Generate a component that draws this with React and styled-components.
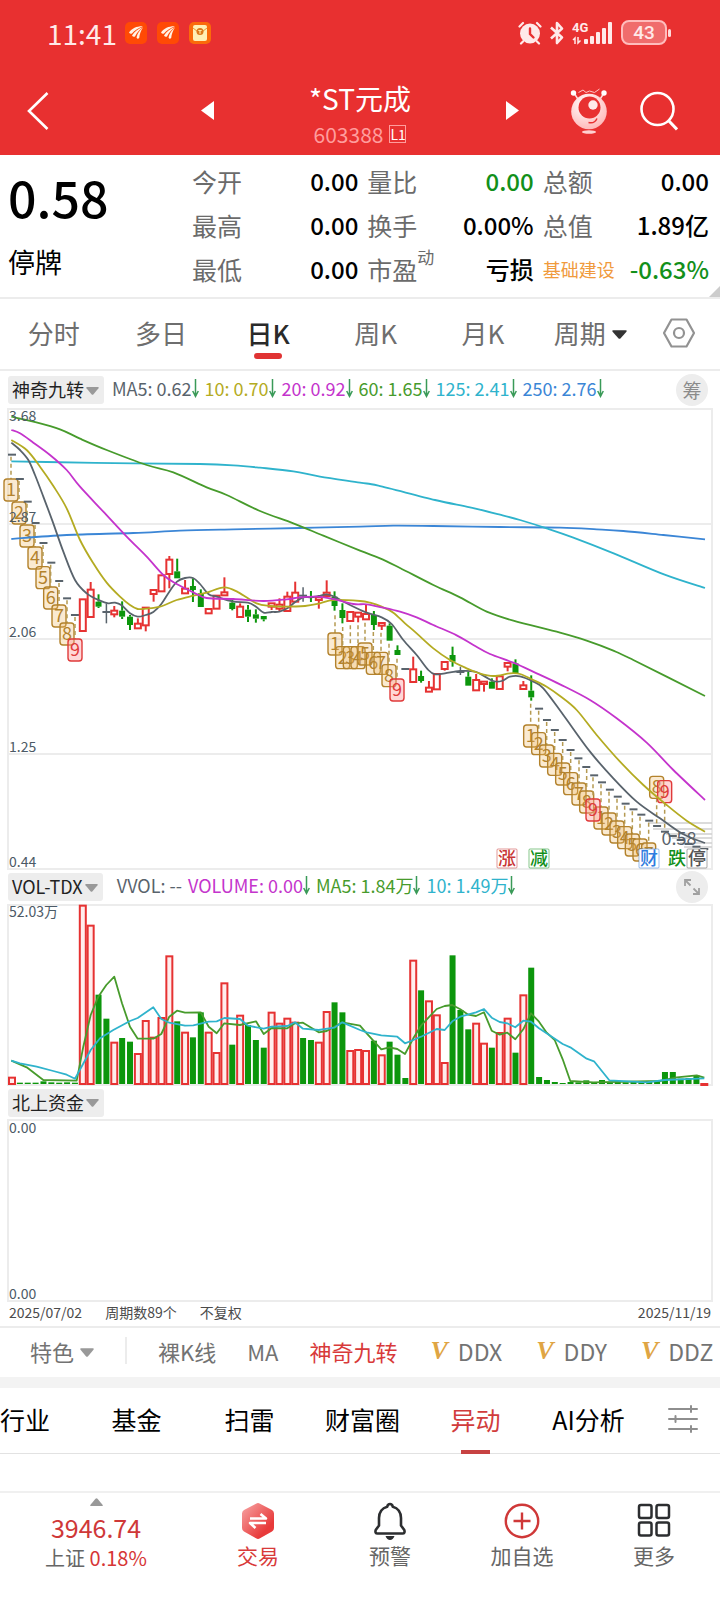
import React from "react";
import styled, { createGlobalStyle, css } from "styled-components";

const red = "#e83030";
const Global = createGlobalStyle`
  * { box-sizing: border-box; }
  body { margin: 0; background: #fff; font-family: "Noto Sans CJK SC", "Noto Sans", sans-serif; color: #000; }
  button { font: inherit; color: inherit; background: none; border: 0; padding: 0; margin: 0; cursor: pointer; }
  svg { display: block; flex: none; }
  h1, p, dl, dd, dt { margin: 0; font-weight: 400; }
`;

const Page = styled.div`
  min-height: 100vh;
  display: flex;
  flex-direction: column;
  overflow-x: hidden;
`;

/* ---------- header ---------- */
const Header = styled.header`
  background: ${red};
  color: #fff;
  height: 155px;
`;
const StatusBar = styled.div`
  height: 66px;
  padding: 0 48px 0 47px;
  display: flex;
  align-items: center;
  gap: 8px;
`;
const Clock = styled.span`
  font-size: 28px;
  line-height: 32px;
  color: #ffe9e9;
`;
const StatusApps = styled.div`
  display: flex;
  gap: 10px;
  flex: 1;
`;
const TitleBar = styled.div`
  height: 89px;
  padding: 0 42px;
  display: grid;
  grid-template-columns: 1fr 318px 1fr;
  align-items: center;
`;
const BackButton = styled.button`
  justify-self: start;
  && { margin-left: -16px; }
`;
const Switcher = styled.div`
  display: flex;
  align-items: center;
  justify-content: space-between;
`;
const TitleBlock = styled.div`
  text-align: center;
`;
const StockName = styled.h1`
  font-size: 28px;
  line-height: 40px;
  padding-top: 6px;
`;
const StockCode = styled.p`
  display: flex;
  align-items: center;
  justify-content: center;
  gap: 6px;
  font-size: 21px;
  line-height: 32px;
  color: #ff9d9d;
`;
const Level = styled.span`
  border: 1px solid #ff9d9d;
  color: #fff;
  font-size: 14px;
  line-height: 16px;
  height: 18px;
  width: 17px;
`;
const HeaderActions = styled.div`
  display: flex;
  justify-content: flex-end;
  align-items: center;
  gap: 32px;
`;

/* ---------- quote ---------- */
const Quote = styled.section`
  display: grid;
  grid-template-columns: 184px 1fr;
  padding: 4px 11px 5px 8px;
  height: 144px;
  border-bottom: 2px solid #ececec;
  position: relative;
`;
const Fold = styled.span`
  position: absolute;
  right: 0;
  bottom: 0;
  border-left: 11px solid transparent;
  border-bottom: 11px solid #ccc;
`;
const Price = styled.p`
  font-size: 50px;
  line-height: 74px;
  font-weight: 500;
`;
const State = styled.p`
  font-size: 27px;
  line-height: 58px;
`;
const Stats = styled.dl`
  display: grid;
  grid-template-columns: repeat(3, 1fr);
  grid-auto-rows: 44px;
  column-gap: 9px;
`;
const Stat = styled.div`
  display: flex;
  justify-content: space-between;
  align-items: center;
  white-space: nowrap;
  line-height: 44px;
`;
const StatLabel = styled.dt`
  font-size: ${(p) => (p.$sector ? 18 : 25)}px;
  color: ${(p) => (p.$sector ? "#f09a3c" : "#6b6b6b")};
  position: relative;
`;
const Sup = styled.sup`
  position: absolute;
  left: 100%;
  top: -12px;
  font-size: 17px;
`;
const StatValue = styled.dd`
  font-size: 24px;
  font-weight: 500;
  color: ${(p) => (p.$down ? "#12901a" : "#000")};
`;

/* ---------- period tabs ---------- */
const Periods = styled.nav`
  display: flex;
  align-items: center;
  height: 72px;
  padding-right: 6px;
  border-bottom: 2px solid #ececec;
`;
const Period = styled.button`
  flex: 107 1 0;
  height: 70px;
  display: flex;
  align-items: center;
  justify-content: center;
  gap: 6px;
  font-size: 26px;
  line-height: 40px;
  && { padding-bottom: 2px; }
  position: relative;
  white-space: nowrap;
  color: #6e6e6e;
  ${(p) => p.$active && css`
    color: #2a2a2a;
    font-weight: 500;
    &::after {
      content: "";
      position: absolute;
      bottom: 10px;
      width: 28px;
      height: 6px;
      border-radius: 3px;
      background: #e03333;
    }
  `}
`;
const SettingsButton = styled(Period)`
  flex: 70 1 0;
`;

/* ---------- charts ---------- */
const ChartArea = styled.section`
  padding: 0 8px;
`;
const Legend = styled.div`
  display: flex;
  align-items: center;
  height: ${(p) => p.$height}px;
  gap: 6px;
`;
const IndicatorButton = styled.button`
  display: flex;
  align-items: center;
  gap: 2px;
  height: 28px;
  && {
    padding: 0 5px 2px 4px;
    margin-right: ${(p) => (p.$wide ? 8 : 2)}px;
  }
  border-radius: 3px;
  background: #ededed;
  color: #222;
  font-size: 18px;
  line-height: 26px;
  white-space: nowrap;
`;
const Reading = styled.span`
  display: flex;
  align-items: center;
  padding-bottom: 4px;
  font-size: 18px;
  line-height: 26px;
  white-space: nowrap;
  color: ${(p) => p.$color};
`;
const Round = styled.button`
  width: 32px;
  height: 32px;
  && { margin: 0 4px 0 auto; }
  border-radius: 50%;
  background: #ededed;
  color: #8b8b8b;
  font-size: 19px;
  line-height: 32px;
  display: flex;
  align-items: center;
  justify-content: center;
`;
const Plot = styled.svg`
  width: 100%;
  height: auto;
  overflow: visible;
  font-family: "Noto Sans CJK SC", sans-serif;
`;
const DateRow = styled.div`
  display: flex;
  gap: 23px;
  font-size: 14px;
  line-height: 23px;
  padding: 0 1px 2px;
  color: #4b4b4b;
  & > :last-child { margin-left: auto; }
`;

/* ---------- feature strip ---------- */
const Features = styled.nav`
  display: flex;
  align-items: center;
  gap: 31px;
  height: 51px;
  padding: 0 0 4px 30px;
  border-top: 2px solid #ececec;
  overflow: hidden;
`;
const Feature = styled.button`
  flex: none;
  display: flex;
  align-items: center;
  gap: ${(p) => (p.$vip ? 10 : 6)}px;
  && { padding: ${(p) => (p.$vip ? "0 1px 0 2px" : "0")}; }
  font-size: ${(p) => (p.$vip ? 23 : 22)}px;
  line-height: 32px;
  white-space: nowrap;
  color: ${(p) => (p.$active ? "#d83a3a" : "#737373")};
`;
const Divider = styled.span`
  flex: none;
  width: 2px;
  height: 27px;
  background: #ececec;
`;
const Vip = styled.span`
  font-family: "Liberation Serif", serif;
  font-style: italic;
  font-weight: 700;
  font-size: 26px;
  color: #dfa544;
`;

/* ---------- section tabs ---------- */
const Sections = styled.nav`
  display: flex;
  align-items: stretch;
  height: 77px;
  border-top: 11px solid #f3f3f3;
  border-bottom: 1px solid #e2e2e2;
`;
const SectionTab = styled.button`
  flex: ${(p) => p.$grow || 113} 1 0;
  display: flex;
  align-items: center;
  justify-content: ${(p) => (p.$cut ? "flex-start" : "center")};
  font-size: 25px;
  && { padding-bottom: 3px; }
  position: relative;
  white-space: nowrap;
  color: ${(p) => (p.$active ? "#d13c3c" : "#000")};
  ${(p) => p.$active && css`
    &::after {
      content: "";
      position: absolute;
      bottom: -1px;
      width: 29px;
      height: 4px;
      background: #c74242;
    }
  `}
`;

/* ---------- bottom bar ---------- */
const BottomBar = styled.nav`
  margin-top: auto;
  display: grid;
  grid-template-columns: 192fr 132fr 132fr 132fr 132fr;
  height: 113px;
  border-top: 2px solid #f0f0f0;
`;
const NavItem = styled.button`
  display: flex;
  flex-direction: column;
  align-items: center;
  && { padding-top: 9px; }
  font-size: 21px;
  line-height: 30px;
  color: ${(p) => (p.$active ? "#d83a3a" : "#666")};
`;
const IndexItem = styled.button`
  display: flex;
  flex-direction: column;
  align-items: center;
  && { padding-top: 5px; }
  font-size: 20px;
  line-height: 30px;
  color: #666;
`;
const IndexValue = styled.span`
  font-size: 25px;
  line-height: 32px;
  padding-top: 5px;
  color: #cf3838;
`;
const Up = styled.span`
  color: #d63636;
`;

/* ---------- icons ---------- */
const Caret = ({ w = 13, h = 8, color = "#999" }) => (
  <svg width={w} height={h + 3} viewBox="0 -3 13 11" preserveAspectRatio="none">
    <path d="M1.2 0h10.6q1.6 0 .7 1.3L7.5 7.3q-1 1.1-2 0L.5 1.3Q-.4 0 1.2 0z" fill={color} />
  </svg>
);
const DownArrow = () => (
  <svg width="7" height="20" viewBox="0 0 7 20" fill="none" stroke="#3a9a58" strokeWidth="1.5">
    <path d="M3.5 1v17M.7 13l2.8 5.4L6.3 13" />
  </svg>
);
const MailApp = () => (
  <svg width="22" height="22" viewBox="0 0 22 22">
    <rect width="22" height="22" rx="5" fill="#ff4a05" />
    <path d="M18 4.200C12 4 7 6 4 10.500q1.500 2 3.200.7C9.500 8.500 13 6 18 4.200zM18 5C13 7 9.500 9.500 7 13.500q1.200 2 3 1C12 10.500 14 8 18 5zM18 5.500c-3.500 3-5.500 5.500-6.500 10q1 2.300 2.700.6C14.500 12 16 8.500 18 5.500z" fill="#fff3e6" />
  </svg>
);
const PacketApp = () => (
  <svg width="22" height="22" viewBox="0 0 22 22">
    <rect width="22" height="22" rx="5" fill="#fb6a0a" />
    <rect x="4" y="3" width="14" height="16" rx="2" fill="#fff0b5" />
    <path d="M4 6l4.500 3.500M18 6l-4.500 3.500" stroke="#e39b3c" fill="none" />
    <circle cx="11" cy="9.500" r="3.500" fill="#dd7a1a" />
    <path d="M9.300 8.500h3.400M11 8.500v3.200" stroke="#ffe9a0" strokeWidth="1.200" />
  </svg>
);
const Alarm = () => (
  <svg width="24" height="24" viewBox="0 0 24 24" fill="none" stroke="#ffe9e9" strokeWidth="2.2" strokeLinecap="round">
    <circle cx="12" cy="12.500" r="10" fill="#ffe9e9" stroke="none" />
    <path d="M1.500 5.500L5 2M22.500 5.500L19 2M5 20.500l-2 2M19 20.500l2 2" />
    <path d="M12 7.500v5.500l3.500 3.500" stroke={red} strokeWidth="2.400" />
  </svg>
);
const Bluetooth = () => (
  <svg width="14" height="24" viewBox="0 0 14 24" fill="none" stroke="#ffe9e9" strokeWidth="2.600" strokeLinejoin="round">
    <path d="M1 6.500l11 10L7 22V2l5 5.500L1 17.500" />
  </svg>
);
const Signal = () => (
  <svg width="41" height="24" viewBox="0 0 41 24" fill="#ffe9e9">
    <text x="0" y="11" fontSize="13" fontWeight="700" fontFamily="Roboto, sans-serif">4G</text>
    <path d="M3 23v-6l-2 2M6 16v6l2.500-2.500" stroke="#ffe9e9" strokeWidth="1.500" fill="none" />
    <rect x="12" y="18" width="4" height="5" rx="1" />
    <rect x="18" y="15" width="4" height="8" rx="1" />
    <rect x="24" y="11" width="4" height="12" rx="1" />
    <rect x="30" y="7" width="4" height="16" rx="1" />
    <rect x="36" y="1" width="4" height="22" rx="1" />
  </svg>
);
const Battery = () => (
  <svg width="51" height="26" viewBox="0 0 51 26">
    <rect x="1" y="1" width="44" height="23" rx="7" fill="#f06c6c" stroke="#ffbcbc" strokeWidth="2" />
    <rect x="47" y="9" width="3" height="8" rx="1.500" fill="#ffdada" />
    <text x="23" y="19" textAnchor="middle" fontSize="19" fontWeight="500" fill="#ffe9e9" fontFamily="Roboto, sans-serif">43</text>
  </svg>
);
const Mascot = () => (
  <svg width="38" height="46" viewBox="0 0 38 46">
    <defs>
      <radialGradient id="ball" cx=".4" cy=".3" r=".8">
        <stop offset="0" stopColor="#fff" />
        <stop offset="1" stopColor="#ffb0b0" />
      </radialGradient>
    </defs>
    <path d="M4 5l4.500 7M34 5l-4.500 7" stroke="#ffdcdc" strokeWidth="1.500" />
    <circle cx="3.500" cy="5" r="2.700" fill="#fff" />
    <circle cx="34" cy="5" r="2.700" fill="#fff" />
    <path d="M8.500 4.500L13 2l3 2.500 3.500-1.500 5 1.500L29.500 1" stroke="#ffc4c4" fill="none" />
    <circle cx="19" cy="23.500" r="17.800" fill="url(#ball)" />
    <circle cx="19.500" cy="19.500" r="11" fill={red} />
    <circle cx="23" cy="17" r="4.700" fill="#ffe9e9" />
    <path d="M18.500 34.500q6 1.500 8.500-4" stroke={red} strokeWidth="1.500" fill="none" />
    <ellipse cx="19" cy="44" rx="7" ry="1.700" fill="#ffd0d0" />
  </svg>
);
const Search = () => (
  <svg width="38" height="40" viewBox="0 0 38 40" fill="none" stroke="#fff" strokeWidth="2.600">
    <circle cx="17.500" cy="18" r="16" />
    <path d="M28.500 29.500l8.500 9" strokeWidth="3" />
  </svg>
);
const Hexagon = () => (
  <svg width="32" height="30" viewBox="0 0 32 30" fill="none" stroke="#929292" strokeWidth="2.200">
    <path d="M8.500 1.500h15L31 15l-7.500 13.500h-15L1 15z" strokeLinejoin="round" />
    <circle cx="16" cy="15" r="5" />
  </svg>
);
const Expand = () => (
  <svg width="18" height="18" viewBox="0 0 18 18" fill="none" stroke="#a0a0a0" strokeWidth="1.800">
    <path d="M2 8V2h6M2 2l5.500 5.500M16 10v6h-6M16 16l-5.500-5.500" />
  </svg>
);
const Sliders = () => (
  <svg width="30" height="28" viewBox="0 0 30 28" fill="none" stroke="#8e8e8e" strokeWidth="2" strokeLinecap="round">
    <path d="M1 4h28M1 14h28M1 24h28M23 1v6M7.500 11v6M23 21v6" />
  </svg>
);
const Trade = () => (
  <svg width="34" height="38" viewBox="0 0 34 38">
    <defs>
      <linearGradient id="trade" x1="0" y1="0" x2="1" y2="1">
        <stop offset="0" stopColor="#f7a6a6" />
        <stop offset=".75" stopColor="#e83a3a" />
      </linearGradient>
    </defs>
    <path d="M15 1.700q2-1.200 4 0l12 6.300q2 1 2 3.500v14.500q0 2.500-2 3.500l-12 6.800q-2 1.200-4 0L3 29.500q-2-1-2-3.500V11.500Q1 9 3 8z" fill="url(#trade)" />
    <path d="M9 16.500h16L19.500 12M25 21H9l5.500 5" fill="none" stroke="#fff" strokeWidth="2.600" strokeLinejoin="round" />
  </svg>
);
const Bell = () => (
  <svg width="34" height="38" viewBox="0 0 34 38" fill="none" stroke="#2c2e30" strokeWidth="2.600" strokeLinejoin="round">
    <path d="M17 2c-1.500 0-2.500 1.200-2.800 2.700C9 6 6 10.500 6 16v7.500L2.700 28q-1 3.500 1.800 3.500h25q2.800 0 1.800-3.500L28 23.500V16c0-5.500-3-10-8.200-11.300C19.500 3.200 18.500 2 17 2z" />
    <path d="M12.500 34h9c-1 2.500-2.500 4-4.500 4s-3.500-1.500-4.500-4z" fill="#2c2e30" stroke="none" />
  </svg>
);
const Plus = () => (
  <svg width="36" height="38" viewBox="0 0 36 38" fill="none" stroke="#cf3838" strokeWidth="2.400">
    <circle cx="18" cy="19" r="16.200" />
    <path d="M9.500 19h17M18 10.500v17" />
  </svg>
);
const Grid = () => (
  <svg width="34" height="38" viewBox="0 0 34 38" fill="none" stroke="#2c2e30" strokeWidth="2.500">
    <rect x="2" y="3" width="12.500" height="13" rx="2" />
    <rect x="19.500" y="3" width="12.500" height="13" rx="2" />
    <rect x="2" y="20.500" width="12.500" height="13" rx="2" />
    <rect x="19.500" y="20.500" width="12.500" height="13" rx="2" />
  </svg>
);

/* ---------- chart data ---------- */
/* Each plot is 704 units wide; the series are stored at three times that resolution. */
const S = 3;
const barX = (i) => 4 + i * 7.867;
const line = (pts, ox, oy) =>
  pts.map(([x, y], i) => `${i ? "L" : "M"}${((x - ox) / S).toFixed(1)} ${((y - oy) / S).toFixed(1)}`).join("");
const smooth = (pts, ox, oy) => {
  const p = pts.map(([x, y]) => [(x - ox) / S, (y - oy) / S]);
  let d = `M${p[0]}`;
  for (let i = 0; i < p.length - 1; i++) {
    const a = p[i - 1] || p[i], b = p[i], c = p[i + 1], e = p[i + 2] || c;
    d += `C${b[0] + (c[0] - a[0]) / 6} ${b[1] + (c[1] - a[1]) / 6} ${c[0] - (e[0] - b[0]) / 6} ${c[1] - (e[1] - b[1]) / 6} ${c[0]} ${c[1]}`;
  }
  return d;
};

/* kind, body top, body bottom, high, low */
const candles = [
  ["-", 164], ["-", 237], ["-", 305], ["-", 369], ["-", 429], ["-", 488], ["-", 543], ["-", 595], ["-", 645],
  ["r", 598, 693], ["r", 569, 651, 546], ["g", 605, 620, 583, 624], ["+", 636, 636, 610, 670], ["r", 632, 643, 618, 652],
  ["g", 632, 650, 604, 657], ["g", 650, 675, 645, 690], ["r", 671, 685, 655], ["r", 623, 676, 623, 694], ["r", 570, 582, 570, 605],
  ["r", 526, 574], ["r", 479, 522, 468, 565], ["g", 514, 535, 476], ["r", 566, 580, 540], ["g", 558, 570, 535, 606],
  ["g", 580, 621, 568], ["r", 627, 640], ["r", 587, 626], ["r", 577, 586, 532], ["g", 608, 627, 596, 631],
  ["r", 620, 651, 610], ["g", 629, 650, 615, 666], ["g", 643, 656, 628, 668], ["g", 648, 658, 648, 664], ["r", 610, 620, 610, 630],
  ["r", 614, 626, 595, 635], ["r", 590, 633, 575], ["r", 578, 605, 545], ["+", 587, 587, 562, 605], ["g", 588, 594, 573, 606],
  ["r", 592, 600, 592, 626], ["r", 578, 588, 541], ["g", 590, 618, 574, 632], ["g", 630, 654, 610, 670], ["r", 636, 663],
  ["r", 638, 650, 638, 667], ["r", 642, 658, 612], ["g", 645, 675, 633, 690], ["r", 669, 677, 669, 690], ["g", 677, 722, 670],
  ["g", 750, 765, 736], ["-", 807], ["r", 808, 846, 770], ["g", 828, 843, 812, 848], ["r", 863, 875, 843], ["r", 822, 868],
  ["r", 786, 807, 786, 812], ["g", 765, 785, 740, 800], ["+", 816, 818, 800, 825], ["g", 830, 857, 815], ["r", 840, 871, 822],
  ["r", 845, 852, 845, 875], ["g", 845, 866, 835], ["r", 829, 867], ["r", 789, 800, 789, 814], ["g", 790, 820, 778],
  ["r", 856, 867, 843], ["g", 872, 892, 826, 902],
  ...[146, 180, 210, 240, 270, 295, 321, 346, 367, 389, 410, 431, 448, 464, 482, 498, 515, 528, 540, 552, 560, 567].map((y) => ["-", y + 780]),
];

/* number, centre x, centre y, y of the bar the dashed stem points at */
const counts = [
  [1, 33, 270, 164], [2, 57, 339, 237], [3, 81, 408, 305], [4, 105, 474, 369], [5, 129, 533, 429], [6, 152, 594, 488],
  [7, 177, 648, 543], [8, 201, 702, 595], [9, 225, 750, 645],
  [1, 1005, 732, 640], [2, 1028, 773, 675], [3, 1051, 773, 670], [4, 1074, 773, 670], [5, 1095, 762, 662], [6, 1120, 790, 690],
  [7, 1143, 790, 692], [8, 1167, 827, 725], [9, 1191, 870, 770],
  [1, 1592, 1008, 905], [2, 1616, 1031, 926], [3, 1640, 1068, 960], [4, 1664, 1093, 990], [5, 1688, 1122, 1020],
  [6, 1712, 1151, 1050], [7, 1737, 1182, 1075], [8, 1760, 1206, 1101],
  [1, 1803, 1254, 1147], [2, 1827, 1272, 1169], [3, 1851, 1296, 1190], [4, 1874, 1313, 1211], [5, 1897, 1335, 1228],
  [6, 1920, 1350, 1244], [7, 1946, 1362, 1262], [9, 1779, 1230, 1126],
  [8, 1970, 1162, 1275], [9, 1994, 1175, 1290],
];

const averages = [
  ["#3b86d6", [[34,417],[200,405],[400,399],[540,392],[700,388],[900,384],[1080,380],[1180,377],[1300,378],[1500,381],[1680,383],[1790,388],[1870,393],[1990,405],[2115,418]]],
  ["#2fb3cc", [[34,184],[140,186],[400,190],[600,192],[700,196],[780,203],[880,214],[960,230],[1080,248],[1135,257],[1305,300],[1410,322],[1500,344],[1560,360],[1640,385],[1718,412],[1841,460],[1994,524],[2115,564]]],
  ["#479b2c", [[34,50],[100,65],[180,88],[240,116],[320,150],[440,195],[520,217],[620,262],[680,285],[780,333],[880,370],[970,407],[1080,452],[1140,475],[1200,504],[1300,555],[1380,592],[1460,635],[1540,662],[1680,698],[1760,722],[1840,752],[1900,780],[2115,888]]],
  ["#59636c", [[34,128],[60,150],[85,180],[105,225],[130,290],[158,365],[190,455],[225,540],[260,580],[300,602],[325,610],[345,608],[365,616],[390,640],[413,650],[437,645],[460,636],[484,612],[508,575],[531,545],[555,534],[579,534],[600,552],[626,583],[650,590],[697,604],[744,608],[768,620],[791,638],[815,636],[838,635],[862,625],[885,607],[909,592],[933,592],[956,588],[980,583],[1003,590],[1050,615],[1100,638],[1145,652],[1175,672],[1210,720],[1250,765],[1285,810],[1305,823],[1335,820],[1380,813],[1425,815],[1455,830],[1480,843],[1505,843],[1530,830],[1560,829],[1600,845],[1630,865],[1690,945],[1770,1055],[1840,1135],[1910,1205],[1980,1255],[2050,1303],[2115,1329]]],
  ["#b4ab22", [[34,120],[80,150],[120,200],[160,258],[200,325],[240,420],[280,490],[320,548],[360,590],[390,615],[413,627],[437,626],[480,620],[530,600],[580,587],[620,578],[673,562],[715,577],[770,610],[810,618],[850,620],[915,618],[960,610],[1000,600],[1080,603],[1110,608],[1145,620],[1180,638],[1215,670],[1250,700],[1300,745],[1350,780],[1400,805],[1435,819],[1480,828],[1530,820],[1560,822],[1600,840],[1640,860],[1680,888],[1730,930],[1790,1005],[1860,1085],[1930,1155],[2000,1215],[2060,1262],[2115,1295]]],
  ["#c434cc", [[34,90],[60,100],[100,128],[150,165],[200,210],[240,260],[310,335],[380,410],[440,470],[490,525],[530,552],[580,577],[620,594],[700,597],[790,603],[860,598],[900,592],[950,590],[1000,597],[1060,612],[1100,613],[1145,622],[1200,635],[1250,652],[1300,675],[1370,706],[1420,735],[1470,762],[1540,788],[1610,820],[1680,853],[1770,900],[1850,955],[1940,1028],[2020,1110],[2115,1200]]],
];

const volumes = ("r620 g638 g638 g638 g634 g637 g638 g637 g638 r104 r164 g374 g446 r515 g504 g515 r549 r450 r500 r441 r256 g454 r485 g502 g427 r485 r546 r337 g524 r434 g465 g510 g533 r425 r458 r443 r455 g504 g510 r515 r423 g397 g427 r540 r537 r540 g512 r553 g515 g554 g624 r269 g361 r391 r433 r576 g256 g420 g478 r458 r518 g533 r486 r443 g548 r373 g293 g621 g630 g636 g639 g636 g637 g631 g637 g630 g637 g633 g637 g634 g637 g635 g634 g606 g606 g626 g624 g616 r639")
  .split(" ").map((s) => [s[0], Number(s.slice(1))]);

const volumeLines = [
  ["#479b2c", [[34,572],[80,592],[130,630],[230,632],[250,530],[272,435],[295,380],[319,345],[343,320],[366,400],[390,470],[413,506],[460,506],[484,492],[508,440],[531,422],[555,428],[602,427],[626,470],[650,490],[673,460],[720,465],[768,454],[791,492],[815,474],[862,475],[885,460],[909,458],[956,487],[980,483],[1027,457],[1080,467],[1100,490],[1144,538],[1168,532],[1192,537],[1215,552],[1240,505],[1263,467],[1286,442],[1310,417],[1334,408],[1357,405],[1381,418],[1405,434],[1428,438],[1452,427],[1475,482],[1499,494],[1522,488],[1546,508],[1570,478],[1593,430],[1617,455],[1640,488],[1664,510],[1688,568],[1711,633],[1780,637],[1980,633],[2030,622],[2090,616],[2113,623]]],
  ["#2fb3cc", [[34,572],[60,580],[110,590],[160,603],[200,614],[225,626],[272,540],[300,505],[340,480],[390,453],[413,444],[460,412],[484,447],[508,458],[555,467],[580,466],[626,455],[650,454],[673,444],[720,447],[744,467],[791,476],[815,470],[862,468],[885,457],[909,476],[956,480],[1003,473],[1027,457],[1080,480],[1100,487],[1144,496],[1192,500],[1215,520],[1240,510],[1263,500],[1310,477],[1334,480],[1357,454],[1381,440],[1428,427],[1452,417],[1475,443],[1499,456],[1522,460],[1546,472],[1570,452],[1593,455],[1617,475],[1688,522],[1711,532],[1760,566],[1782,574],[1828,631],[1940,637],[1994,630],[2113,625]]],
];

const UP = "#e63232", DOWN = "#0c960c", FLAT = "#59636c";

const Candle = ({ data, i }) => {
  const [kind, top, bottom = top, high = top, low = bottom] = data;
  const y = (v) => (v - 27) / S;
  const x = barX(i);
  if (kind === "-" || kind === "+")
    return (
      <g stroke={FLAT} strokeWidth="2">
        <path d={`M${x - 4} ${y(top)}h8`} />
        {kind === "+" && <path d={`M${x} ${y(high)}V${y(Math.max(low, bottom))}`} strokeWidth="1.5" />}
      </g>
    );
  const color = kind === "r" ? UP : DOWN;
  const end = Math.max(low, bottom);
  return (
    <g stroke={color} strokeWidth="2">
      {high < top && <path d={`M${x} ${y(high)}V${y(top)}`} />}
      {end > bottom && <path d={`M${x} ${y(bottom)}V${y(end)}`} />}
      <rect x={x - 3} y={y(top)} width="6" height={(bottom - top) / S} fill={kind === "r" ? "#fff" : color} strokeWidth={kind === "r" ? 2 : 0} />
    </g>
  );
};

const Count = ({ data: [n, cx, cy, stem] }) => {
  const x = (cx - 24) / S, y = (cy - 27) / S, t = (stem - 27) / S;
  const hot = n === 9;
  const color = hot ? "#e03a3a" : "#b3822c";
  return (
    <g>
      <path d={t < y ? `M${x} ${t + 2}V${y - 11}` : `M${x} ${y + 11}V${t}`} stroke="#b59a52" strokeWidth="1.500" strokeDasharray="4 3" />
      <rect x={x - 7} y={y - 11} width="14" height="22" rx="3" fill={hot ? "#ff9a9a" : "#f0b868"} fillOpacity={hot ? 0.4 : 0.3} stroke={color} strokeWidth="1.400" />
      <text x={x} y={y + 6} textAnchor="middle" fontSize="18" fill={color}>{n}</text>
    </g>
  );
};

const tags = [["涨", 489, "#c93636", "#c93636"], ["减", 521, "#12901a", "#12901a"], ["财", 631, "#2f7de0", "#2f7de0"], ["跌", 659, "#12901a", "#fff"], ["停", 679, "#555", "#555"]];

const Frame = ({ h }) => <rect x="0" y="0" width="704" height={h} fill="none" stroke="#ececec" strokeWidth="2" />;
const Scale = ({ y, children }) => <text x="1" y={y} fontSize="14" fill="#4c5a66">{children}</text>;

const PriceChart = () => (
  <Plot viewBox="0 0 704 460" role="img" aria-label="日K">
    <Frame h={460} />
    <path d="M0 115H704M0 230H704M0 345H704" stroke="#ececec" strokeWidth="2" />
    <path d="M640 414H704M645 420H704M658 425H704M664 429H704M672 434H704M676 438H704" stroke="#d0d0d0" strokeWidth="1.500" />
    {counts.map((c, i) => <Count key={i} data={c} />)}
    <text x="671" y="436" textAnchor="middle" fontSize="18" fill="#59636c">0.58</text>
    {candles.map((c, i) => <Candle key={i} data={c} i={i} />)}
    {averages.map(([color, pts]) => <path key={color} d={smooth(pts, 24, 27)} fill="none" stroke={color} strokeWidth="1.800" />)}
    <Scale y="12">3.68</Scale>
    <Scale y="113">2.87</Scale>
    <Scale y="228">2.06</Scale>
    <Scale y="343">1.25</Scale>
    <Scale y="458">0.44</Scale>
    {tags.map(([t, x, color, edge]) => (
      <g key={t}>
        <rect x={x} y="440" width="20" height="19" rx="1" fill="#fff" stroke={edge} strokeOpacity=".5" />
        <text x={x + 10} y="456" textAnchor="middle" fontSize="18" fontWeight="500" fill={color}>{t}</text>
      </g>
    ))}
  </Plot>
);

const VolumeChart = () => (
  <Plot viewBox="0 0 704 180" role="img" aria-label="VOL-TDX">
    <Frame h={180} />
    {volumes.map(([kind, v], i) => {
      const y = (v - 105) / S;
      return kind === "r"
        ? <rect key={i} x={barX(i) - 3} y={y + 1} width="6" height={Math.max(178 - y, 1)} fill="#ffeded" stroke={UP} strokeWidth="2" />
        : <rect key={i} x={barX(i) - 3} y={y} width="6" height={179 - y} fill={DOWN} />;
    })}
    {volumeLines.map(([color, pts]) => <path key={color} d={line(pts, 24, 105)} fill="none" stroke={color} strokeWidth="1.800" strokeLinejoin="round" />)}
    <Scale y="12">52.03万</Scale>
  </Plot>
);

const FundsChart = () => (
  <Plot viewBox="0 0 704 181" role="img" aria-label="北上资金">
    <Frame h={181} />
    <Scale y="13">0.00</Scale>
    <Scale y="179">0.00</Scale>
  </Plot>
);

const stats = [
  ["今开", "0.00"], ["量比", "0.00", { down: true }], ["总额", "0.00"],
  ["最高", "0.00"], ["换手", "0.00%"], ["总值", "1.89亿"],
  ["最低", "0.00"], ["市盈", "亏损", { sup: "动" }], ["基础建设", "-0.63%", { down: true, sector: true }],
];
const maReadings = [
  ["MA5: 0.62", "#59636c"], ["10: 0.70", "#b4ab22"], ["20: 0.92", "#c434cc"],
  ["60: 1.65", "#479b2c"], ["125: 2.41", "#2fb3cc"], ["250: 2.76", "#3b86d6"],
];

export default function App() {
  return (
    <Page>
      <Global />
      <Header>
        <StatusBar>
          <Clock>11:41</Clock>
          <StatusApps><MailApp /><MailApp /><PacketApp /></StatusApps>
          <Alarm /><Bluetooth /><Signal /><Battery />
        </StatusBar>
        <TitleBar>
          <BackButton aria-label="返回">
            <svg width="24" height="38" viewBox="0 0 24 38" fill="none" stroke="#fff" strokeWidth="2.600"><path d="M21.500 1L3 19l18.500 18" /></svg>
          </BackButton>
          <Switcher>
            <button aria-label="上一只"><svg width="13" height="19" viewBox="0 0 13 19"><path d="M13 0v19L0 9.500z" fill="#fff" /></svg></button>
            <TitleBlock>
              <StockName>*ST元成</StockName>
              <StockCode>603388<Level>L1</Level></StockCode>
            </TitleBlock>
            <button aria-label="下一只"><svg width="13" height="19" viewBox="0 0 13 19"><path d="M0 0v19l13-9.500z" fill="#fff" /></svg></button>
          </Switcher>
          <HeaderActions>
            <button aria-label="助手"><Mascot /></button>
            <button aria-label="搜索"><Search /></button>
          </HeaderActions>
        </TitleBar>
      </Header>

      <Quote>
        <div>
          <Price>0.58</Price>
          <State>停牌</State>
        </div>
        <Stats>
          {stats.map(([label, value, o = {}]) => (
            <Stat key={label}>
              <StatLabel $sector={o.sector}>{label}{o.sup && <Sup>{o.sup}</Sup>}</StatLabel>
              <StatValue $down={o.down}>{value}</StatValue>
            </Stat>
          ))}
        </Stats>
        <Fold />
      </Quote>

      <Periods>
        {["分时", "多日", "日K", "周K", "月K"].map((t) => <Period key={t} $active={t === "日K"}>{t}</Period>)}
        <Period>周期<Caret w={15} h={9} color="#333" /></Period>
        <SettingsButton aria-label="设置"><Hexagon /></SettingsButton>
      </Periods>

      <ChartArea>
        <Legend $height={38}>
          <IndicatorButton>神奇九转<Caret /></IndicatorButton>
          {maReadings.map(([t, c]) => <Reading key={t} $color={c}>{t}<DownArrow /></Reading>)}
          <Round>筹</Round>
        </Legend>
        <PriceChart />
        <Legend $height={36}>
          <IndicatorButton $wide>VOL-TDX<Caret /></IndicatorButton>
          <Reading $color="#59636c">VVOL: --</Reading>
          <Reading $color="#c434cc">VOLUME: 0.00<DownArrow /></Reading>
          <Reading $color="#479b2c">MA5: 1.84万<DownArrow /></Reading>
          <Reading $color="#2fb3cc">10: 1.49万<DownArrow /></Reading>
          <Round aria-label="展开"><Expand /></Round>
        </Legend>
        <VolumeChart />
        <Legend $height={35}>
          <IndicatorButton>北上资金<Caret /></IndicatorButton>
        </Legend>
        <FundsChart />
        <DateRow>
          <span>2025/07/02</span>
          <span>周期数89个</span>
          <span>不复权</span>
          <span>2025/11/19</span>
        </DateRow>
      </ChartArea>

      <Features>
        <Feature>特色<Caret w={14} h={9} /></Feature>
        <Divider />
        <Feature>裸K线</Feature>
        <Feature>MA</Feature>
        <Feature $active>神奇九转</Feature>
        {["DDX", "DDY", "DDZ"].map((t) => <Feature key={t} $vip><Vip>V</Vip>{t}</Feature>)}
      </Features>

      <Sections>
        <SectionTab $cut $grow={80}>行业</SectionTab>
        {["基金", "扫雷", "财富圈", "异动", "AI分析"].map((t) => <SectionTab key={t} $active={t === "异动"}>{t}</SectionTab>)}
        <SectionTab $grow={75} aria-label="栏目设置"><Sliders /></SectionTab>
      </Sections>

      <BottomBar>
        <IndexItem>
          <svg width="13" height="8" viewBox="0 0 13 8"><path d="M1.200 8h10.600q1.600 0 .7-1.300L7.500.7q-1-1.100-2 0l-5 6Q-.4 8 1.200 8z" fill="#999" /></svg>
          <IndexValue>3946.74</IndexValue>
          <span>上证 <Up>0.18%</Up></span>
        </IndexItem>
        <NavItem $active><Trade />交易</NavItem>
        <NavItem><Bell />预警</NavItem>
        <NavItem><Plus />加自选</NavItem>
        <NavItem><Grid />更多</NavItem>
      </BottomBar>
    </Page>
  );
}
